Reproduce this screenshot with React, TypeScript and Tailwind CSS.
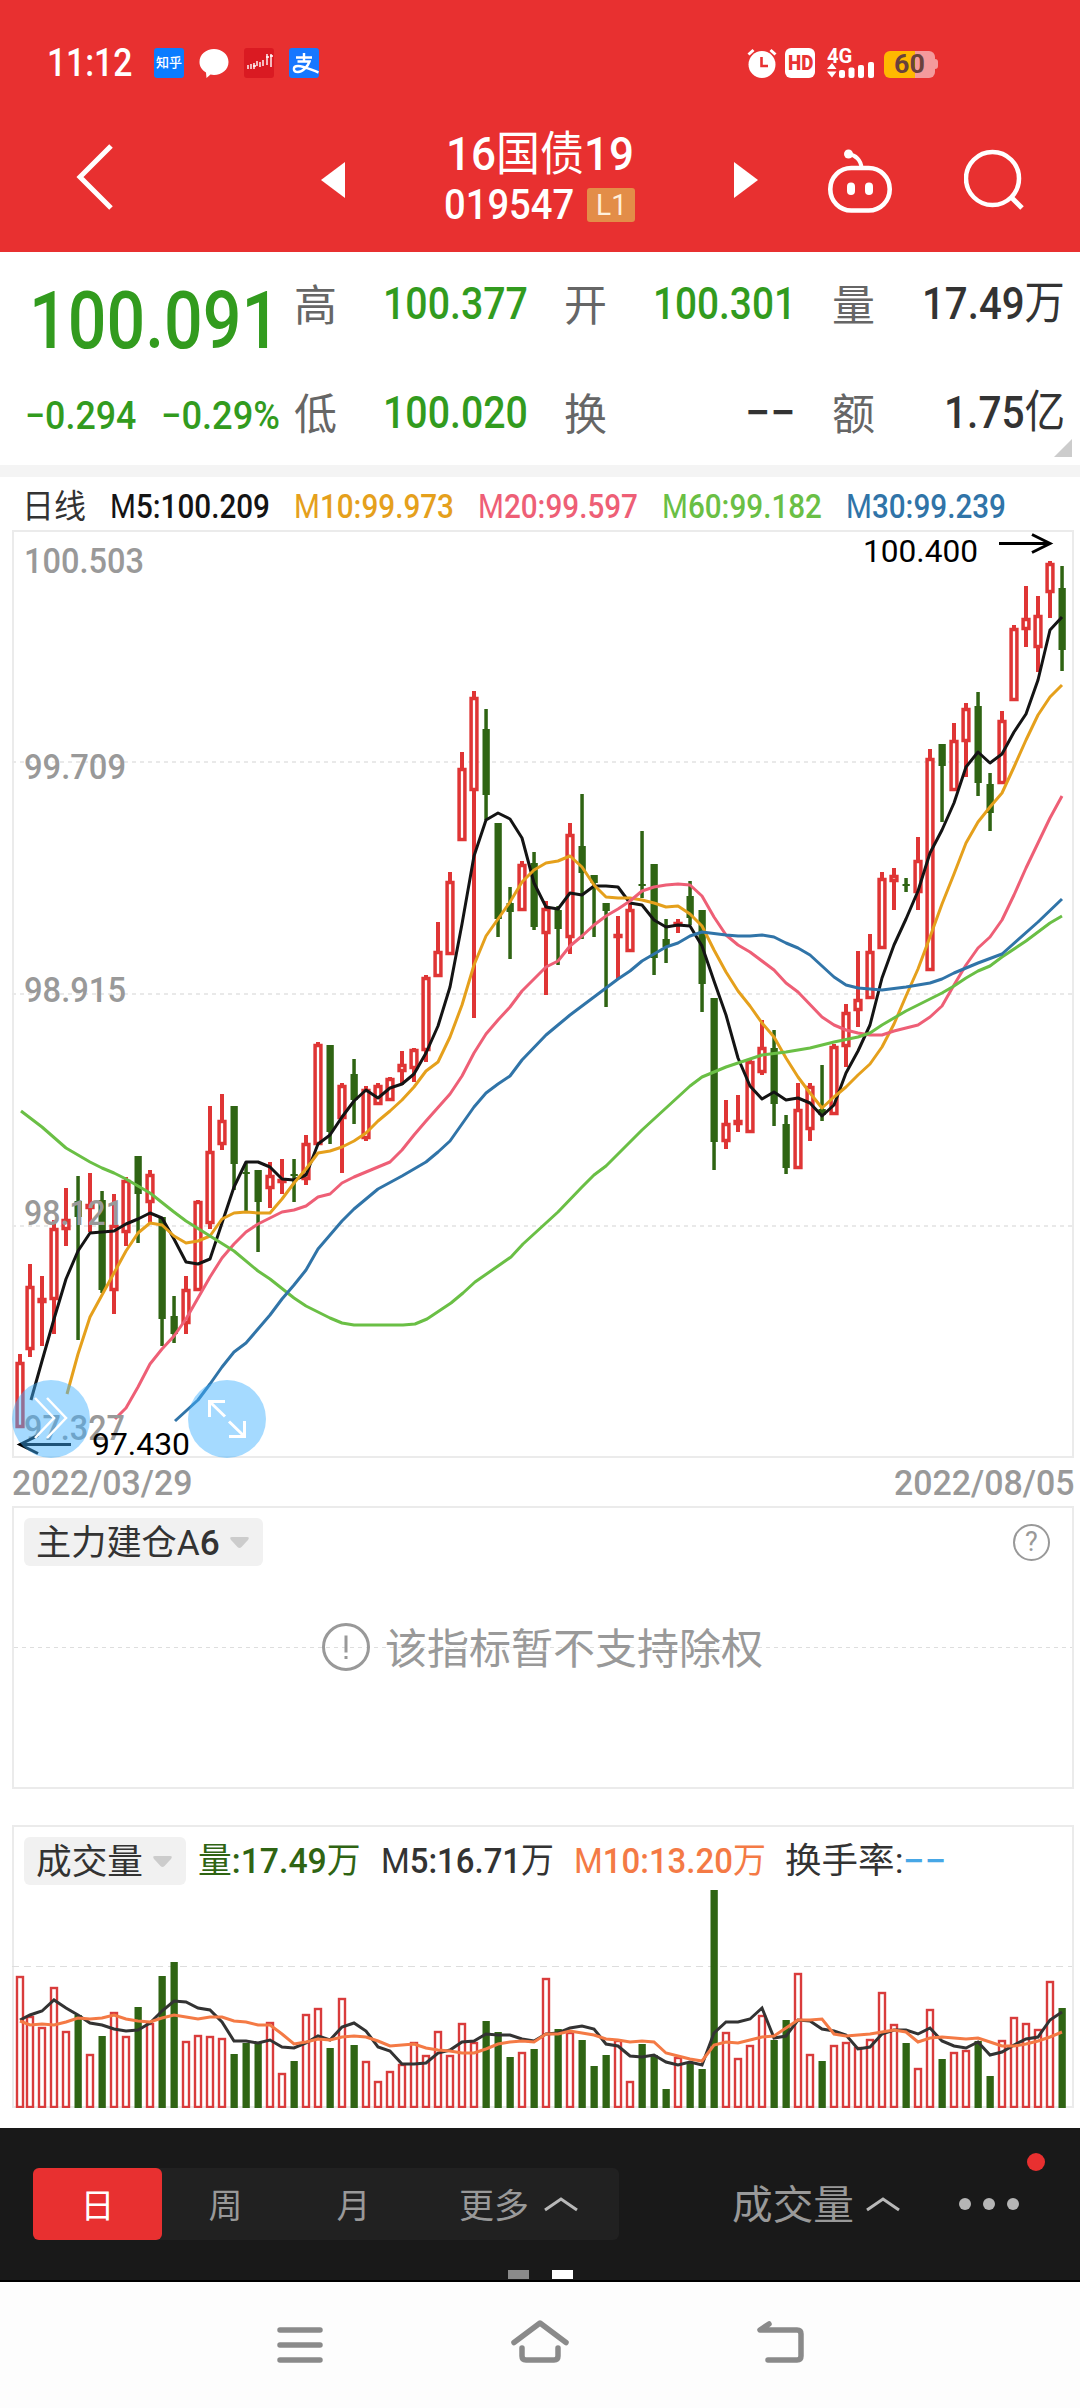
import { useLayoutEffect, useRef, useState } from "react";
import type { ReactNode } from "react";

/* ---------- helpers ---------- */

// Condenses or widens a run of text so that it occupies exactly `w` pixels.
function Fit({ w, className = "", children }: { w: number; className?: string; children: ReactNode }) {
  const ref = useRef<HTMLSpanElement>(null);
  const [scale, setScale] = useState(1);
  useLayoutEffect(() => {
    const el = ref.current;
    if (el && el.offsetWidth > 0) setScale(w / el.offsetWidth);
  }, [w]);
  return (
    <span className={"inline-flex shrink-0 justify-start whitespace-nowrap " + className} style={{ width: w }}>
      <span ref={ref} className="inline-block shrink-0 origin-left" style={{ transform: `scaleX(${scale})` }}>
        {children}
      </span>
    </span>
  );
}

// Figures are set in medium weight, letters and Chinese characters in regular.
function Mixed({ text }: { text: string }) {
  return (
    <>
      {text.split(/([0-9.:−/]+)/).map((part, i) =>
        i % 2 ? (
          <span key={i} className="font-medium">{part}</span>
        ) : (
          <span key={i} className="font-normal">{part}</span>
        ),
      )}
    </>
  );
}

/* ---------- price data (x, high, body top, body bottom, low, direction) ---------- */

type Candle = [number, number, number, number, number, "r" | "g"];

const candles: Candle[] = [
  [20, 1354, 1362, 1428, 1428, "r"], [30, 1264, 1286, 1350, 1357, "r"], [42, 1276, 1298, 1303, 1346, "r"],
  [54, 1220, 1228, 1300, 1334, "r"], [66, 1188, 1219, 1230, 1246, "r"], [78, 1176, 1201, 1217, 1340, "g"],
  [90, 1173, 1204, 1209, 1232, "r"], [102, 1191, 1200, 1290, 1293, "g"], [114, 1194, 1225, 1291, 1314, "r"],
  [126, 1177, 1180, 1233, 1246, "r"], [138, 1156, 1156, 1194, 1243, "g"], [150, 1170, 1174, 1203, 1223, "r"],
  [162, 1217, 1217, 1319, 1346, "g"], [174, 1296, 1316, 1334, 1343, "g"], [186, 1276, 1289, 1324, 1334, "r"],
  [198, 1200, 1201, 1291, 1291, "r"], [210, 1106, 1151, 1224, 1229, "r"], [222, 1094, 1120, 1145, 1150, "r"],
  [234, 1106, 1106, 1164, 1190, "g"], [246, 1163, 1172, 1174, 1213, "g"], [258, 1170, 1170, 1202, 1252, "g"],
  [270, 1162, 1175, 1189, 1208, "r"], [282, 1159, 1179, 1183, 1194, "r"], [294, 1159, 1174, 1176, 1202, "g"],
  [306, 1135, 1143, 1180, 1185, "r"], [318, 1042, 1044, 1145, 1145, "r"], [330, 1045, 1045, 1132, 1144, "g"],
  [342, 1083, 1085, 1119, 1173, "r"], [354, 1059, 1074, 1100, 1124, "g"], [366, 1086, 1089, 1139, 1141, "r"],
  [378, 1083, 1085, 1105, 1105, "r"], [390, 1077, 1078, 1101, 1101, "r"], [402, 1051, 1064, 1072, 1085, "r"],
  [414, 1048, 1049, 1069, 1082, "r"], [426, 975, 977, 1051, 1062, "r"], [438, 922, 951, 977, 977, "r"],
  [450, 872, 881, 955, 955, "r"], [462, 752, 768, 841, 841, "r"], [474, 691, 697, 791, 1018, "r"],
  [486, 709, 729, 795, 820, "g"], [498, 823, 823, 919, 937, "g"], [510, 887, 903, 912, 959, "g"],
  [522, 861, 864, 911, 911, "r"], [534, 852, 863, 927, 930, "g"], [546, 901, 908, 934, 995, "r"],
  [558, 906, 910, 929, 965, "g"], [570, 823, 834, 938, 954, "r"], [582, 794, 846, 873, 939, "g"],
  [594, 875, 875, 883, 937, "g"], [606, 903, 903, 911, 1007, "g"], [618, 916, 934, 938, 979, "r"],
  [630, 903, 909, 952, 952, "r"], [642, 831, 884, 886, 898, "g"], [654, 864, 864, 958, 975, "g"],
  [666, 919, 939, 947, 963, "g"], [678, 919, 922, 926, 933, "r"], [690, 881, 896, 918, 925, "g"],
  [702, 910, 910, 984, 1012, "g"], [714, 998, 998, 1142, 1170, "g"], [726, 1100, 1123, 1142, 1149, "r"],
  [738, 1095, 1120, 1125, 1132, "r"], [750, 1060, 1061, 1133, 1133, "r"], [762, 1020, 1047, 1073, 1075, "r"],
  [774, 1030, 1048, 1104, 1126, "g"], [786, 1115, 1124, 1168, 1174, "g"], [798, 1083, 1109, 1169, 1169, "r"],
  [810, 1083, 1086, 1130, 1141, "r"], [822, 1065, 1109, 1115, 1121, "g"], [834, 1044, 1046, 1115, 1115, "r"],
  [846, 1004, 1012, 1047, 1067, "r"], [858, 951, 999, 1011, 1027, "r"], [870, 934, 951, 999, 999, "r"],
  [882, 872, 878, 949, 949, "r"], [894, 868, 875, 882, 910, "r"], [906, 878, 884, 886, 892, "g"],
  [918, 837, 860, 893, 910, "r"], [930, 749, 758, 971, 971, "r"], [942, 744, 744, 766, 822, "g"],
  [954, 723, 740, 791, 791, "r"], [966, 703, 708, 742, 777, "r"], [978, 692, 706, 783, 796, "g"],
  [990, 773, 784, 813, 831, "g"], [1002, 711, 720, 784, 784, "r"], [1014, 625, 628, 701, 701, "r"],
  [1026, 586, 618, 630, 647, "r"], [1038, 596, 615, 648, 672, "r"], [1050, 561, 563, 593, 618, "r"],
  [1062, 566, 588, 650, 671, "g"],
];

const ma5 =
  "31,1400 42,1361 54,1319 66,1279 78,1251 90,1233 102,1232 114,1231 126,1224 138,1219 150,1213 162,1218 174,1239 186,1262 198,1264 210,1259 222,1223 234,1187 246,1162 258,1162 270,1167 282,1179 294,1180 306,1175 318,1144 330,1135 342,1117 354,1101 366,1090 378,1098 390,1088 402,1084 414,1074 426,1053 438,1026 450,987 462,924 474,856 486,820 498,813 510,819 522,838 534,883 546,907 558,909 570,893 582,895 594,886 606,886 618,887 630,903 642,905 654,920 666,927 678,925 690,926 702,946 714,981 726,1015 738,1058 750,1086 762,1099 774,1092 786,1100 798,1098 810,1103 822,1116 834,1105 846,1073 858,1051 870,1025 882,978 894,945 906,919 918,891 930,853 942,830 954,803 966,767 978,752 990,763 1002,754 1014,732 1026,714 1038,680 1050,630 1062,617";
const ma10 =
  "67,1394 78,1354 90,1317 102,1295 114,1273 126,1251 138,1233 150,1223 162,1225 174,1236 186,1243 198,1241 210,1236 222,1219 234,1213 246,1212 258,1213 270,1213 282,1199 294,1183 306,1169 318,1153 330,1151 342,1147 354,1141 366,1133 378,1121 390,1111 402,1100 414,1087 426,1071 438,1062 450,1037 462,1005 474,965 486,936 498,919 510,902 522,882 534,870 546,863 558,861 570,856 582,867 594,885 606,897 618,898 630,898 642,900 654,903 666,907 678,906 690,914 702,926 714,950 726,972 738,991 750,1006 762,1023 774,1037 786,1058 798,1077 810,1093 822,1108 834,1097 846,1087 858,1075 870,1064 882,1047 894,1024 906,996 918,969 930,937 942,904 954,874 966,843 978,822 990,807 1002,793 1014,767 1026,740 1038,715 1050,697 1062,685";
const ma20 =
  "115,1419 126,1408 138,1387 150,1364 162,1349 174,1336 186,1319 198,1298 210,1277 222,1258 234,1244 246,1232 258,1224 270,1218 282,1212 294,1210 306,1206 318,1197 330,1194 342,1183 354,1177 366,1172 378,1167 390,1162 402,1150 414,1135 426,1121 450,1094 462,1076 474,1053 486,1034 498,1020 510,1007 522,991 546,967 558,961 570,946 582,936 594,925 606,916 618,909 630,901 642,891 654,887 666,885 678,884 690,885 702,896 714,917 726,935 738,945 750,952 774,970 786,983 798,992 822,1017 834,1025 846,1030 858,1033 870,1035 882,1035 894,1031 918,1025 930,1017 942,1006 954,985 966,965 978,948 990,937 1002,920 1014,895 1026,868 1038,843 1050,818 1062,796";
const ma30 =
  "175,1421 186,1411 198,1400 210,1384 222,1367 234,1352 246,1343 258,1329 270,1315 282,1299 294,1285 306,1270 318,1249 330,1235 342,1221 354,1209 378,1189 402,1176 414,1169 426,1162 438,1152 450,1141 474,1107 486,1093 498,1084 510,1076 522,1060 546,1035 558,1025 570,1015 594,997 618,979 630,971 642,961 654,954 666,947 678,943 690,936 702,932 726,935 738,936 750,936 762,935 774,937 786,943 798,948 810,955 834,977 846,985 858,988 882,990 906,987 930,983 942,979 954,973 978,963 1002,954 1038,922 1062,899";
const ma60 =
  "21,1111 42,1127 66,1148 90,1162 102,1168 114,1173 126,1179 150,1193 174,1212 186,1221 210,1236 234,1251 258,1271 270,1279 294,1298 306,1306 330,1318 342,1323 354,1325 403,1325 415,1324 427,1319 451,1303 463,1293 475,1282 511,1257 523,1244 558,1212 582,1187 594,1175 606,1166 630,1142 642,1130 666,1108 690,1086 702,1077 726,1067 750,1059 762,1055 786,1052 810,1048 834,1042 858,1037 870,1033 882,1025 906,1011 942,993 954,986 966,978 978,971 990,966 1002,957 1026,941 1038,932 1050,923 1062,916";

/* ---------- volume data ---------- */

const volumeTops = [
  1976, 2016, 2027, 1987, 2031, 2015, 2054, 2036, 2012, 2036, 2007, 2023, 1976, 1962, 2041, 2035, 2036, 2038, 2054,
  2043, 2043, 2022, 2073, 2061, 2014, 2008, 2048, 1998, 2045, 2061, 2081, 2071, 2064, 2042, 2055, 2031, 2055, 2023,
  2042, 2021, 2032, 2057, 2052, 2049, 1978, 2029, 2032, 2040, 2066, 2055, 2040, 2081, 2044, 2055, 2089, 2057, 2062,
  2069, 1890, 2032, 2058, 2045, 2015, 2040, 2020, 1973, 2054, 2061, 2045, 2042, 2047, 2039, 1992, 2024, 2043, 2068,
  2009, 2059, 2052, 2050, 2041, 2076, 2040, 2017, 2023, 2029, 1981, 2008,
];
const volumeMa5 = [
  2020, 2015, 2011, 2000, 2008, 2015, 2023, 2025, 2029, 2031, 2030, 2023, 2011, 2001, 2002, 2008, 2010, 2022, 2041,
  2041, 2043, 2040, 2047, 2048, 2043, 2036, 2040, 2027, 2023, 2031, 2047, 2051, 2064, 2064, 2063, 2053, 2050, 2042,
  2041, 2034, 2035, 2035, 2039, 2041, 2034, 2033, 2028, 2026, 2029, 2044, 2046, 2056, 2057, 2055, 2062, 2065, 2062,
  2065, 2033, 2022, 2022, 2019, 2008, 2038, 2036, 2020, 2021, 2029, 2031, 2035, 2049, 2047, 2034, 2030, 2030, 2034,
  2028, 2041, 2046, 2048, 2042, 2055, 2052, 2045, 2039, 2037, 2020, 2012,
];
const volumeMa10 = [
  2021, 2025, 2024, 2025, 2022, 2018, 2019, 2018, 2015, 2019, 2021, 2022, 2018, 2015, 2017, 2019, 2017, 2017, 2021,
  2022, 2025, 2025, 2034, 2044, 2042, 2039, 2040, 2037, 2036, 2037, 2041, 2046, 2045, 2044, 2048, 2050, 2051, 2053,
  2053, 2049, 2044, 2042, 2041, 2042, 2034, 2034, 2031, 2033, 2035, 2039, 2040, 2042, 2041, 2042, 2053, 2056, 2059,
  2061, 2045, 2042, 2043, 2040, 2037, 2036, 2028, 2020, 2020, 2019, 2034, 2036, 2035, 2034, 2032, 2030, 2032, 2042,
  2038, 2037, 2038, 2039, 2038, 2042, 2046, 2046, 2044, 2041, 2037, 2032,
];
const volumePath = (ys: number[]) => ys.map((y, i) => `${candles[i][0]},${y}`).join(" ");

/* ---------- status bar ---------- */

function StatusBar() {
  return (
    <div className="flex h-[91px] items-center pt-[35px] pl-[47px] text-white">
      <Fit w={85} className="text-[38px] leading-[56px] font-medium">11:12</Fit>
      <div className="ml-[22px] flex items-center gap-[15px]">
        <div className="flex size-[30px] items-center justify-center rounded-[3px] bg-[#0a7cff] text-[13px] font-medium">知乎</div>
        <svg className="size-[30px]" viewBox="0 0 30 30" fill="currentColor">
          <path d="M15 1C23 1 29.500 6.500 29.500 14S23 27 15 27c-1.500 0-2.500-.2-3.500-.4L7.500 30 7 24.500C3 22 .5 18.500.5 14 .5 6.500 7 1 15 1z" />
        </svg>
        <svg className="size-[30px]" viewBox="0 0 30 30">
          <rect width="30" height="30" rx="3" fill="#da1a22" />
          <path d="M4 17v4M7 16v5M10 15v6M13 13v5M16 14v5M19 12v6M23 6v11M27 6v13" stroke="#fff" strokeWidth="1.400" />
          <path d="M22 9h3M26 8h3M9 18h3" stroke="#fff" strokeWidth="1.500" />
        </svg>
        <div className="flex size-[30px] items-center justify-center rounded-[3px] bg-[#1677ff]">
          <svg className="size-[30px]" viewBox="0 0 30 30" fill="none" stroke="#fff" strokeWidth="2.400">
            <path d="M7 9.500H23M15 5V13.500M8.500 13.500H20.500C19 18 14 24 9 24 3.500 24 3.500 18 9 18 15 18 20 21 29.500 24.500" />
          </svg>
        </div>
      </div>
      <svg className="ml-[428px] h-[30px] w-[30px]" viewBox="0 0 30 30">
        <circle cx="15" cy="16.500" r="13.500" fill="#fff" />
        <path d="M14.500 9v9H21" fill="none" stroke="#e83232" strokeWidth="2.600" />
        <path d="M1.500 6.500 6.500 2M28.500 6.500 23.500 2" stroke="#fff" strokeWidth="3" />
      </svg>
      <div className="ml-[8px] flex size-[30px] items-center justify-center rounded-[6px] bg-white text-[#e83232]">
        <Fit w={25} className="text-[21px] leading-none font-black">HD</Fit>
      </div>
      <div className="relative ml-[12px] h-[30px] w-[47px]">
        <Fit w={25} className="absolute top-[-2px] left-0 text-[21px] leading-none font-bold">4G</Fit>
        <svg className="absolute inset-0 h-[30px] w-[47px]" viewBox="0 0 47 30" fill="#fff">
          <path d="M0 21l5-6 4.500 6zM0 23.500l5 6 4.500-6z" />
          <rect x="12" y="22" width="6" height="8" rx="2" />
          <rect x="21.500" y="19.500" width="6" height="10.500" rx="2" />
          <rect x="31" y="17" width="6" height="13" rx="2" />
          <rect x="41" y="14" width="6" height="16" rx="2" />
        </svg>
      </div>
      <div className="mt-[2px] ml-[10px] flex items-center">
        <div className="flex h-[27px] w-[51px] items-center justify-center rounded-[6px] bg-gradient-to-r from-[#ffb900] from-60% to-[#f49a9c] to-60% text-[#69413c]">
          <Fit w={31} className="text-[26px] leading-none font-bold">60</Fit>
        </div>
        <div className="h-[10px] w-[3px] rounded-r-sm bg-[#f49a9c]" />
      </div>
    </div>
  );
}

function TitleBar() {
  return (
    <div className="flex h-[161px] text-white">
      <svg className="mt-[52px] ml-[74px] h-[68px] w-[40px]" viewBox="0 0 40 68" fill="none" stroke="currentColor" strokeWidth="5">
        <path d="M37 3 6 34 37 65" />
      </svg>
      <svg className="mt-[71px] ml-[207px] h-[36px] w-[24px]" viewBox="0 0 24 36" fill="currentColor">
        <path d="M24 0v36L0 18z" />
      </svg>
      <div className="ml-[101px] w-[194px]">
        <Fit w={188} className="mt-[37px] text-[47px] leading-[52px]"><Mixed text="16国债19" /></Fit>
        <div className="mt-[4px] flex h-[42px] items-center">
          <Fit w={130} className="ml-[-2px] text-[42px] leading-[42px] font-medium">019547</Fit>
          <div className="ml-[13px] flex h-[34px] w-[48px] items-center justify-center rounded-[3px] bg-[#e38d48] text-[#fff0dc]">
            <Fit w={31} className="text-[29px] leading-none">L1</Fit>
          </div>
        </div>
      </div>
      <svg className="mt-[71px] ml-[94px] h-[36px] w-[24px]" viewBox="0 0 24 36" fill="currentColor">
        <path d="M0 0v36l24-18z" />
      </svg>
      <svg className="mt-[57px] ml-[70px] h-[66px] w-[64px]" viewBox="0 0 64 66" fill="none" stroke="currentColor">
        <rect x="2.300" y="20" width="59.400" height="42.500" rx="21" strokeWidth="4.600" />
        <path d="M20.500 6c7 1 12.500 6 13 14" strokeWidth="4" />
        <circle cx="20.500" cy="6" r="4.500" fill="currentColor" stroke="none" />
        <rect x="19" y="34.500" width="8" height="12.500" rx="4" fill="currentColor" stroke="none" />
        <rect x="37" y="34.500" width="8" height="12.500" rx="4" fill="currentColor" stroke="none" />
      </svg>
      <svg className="mt-[58px] ml-[72px] h-[62px] w-[62px]" viewBox="0 0 62 62" fill="none" stroke="currentColor" strokeWidth="4.500">
        <circle cx="28.500" cy="29.500" r="26.500" />
        <path d="M47 48 58 59" strokeWidth="5" />
      </svg>
    </div>
  );
}

/* ---------- quote block ---------- */

function Quote({ label, value, w, dark = false }: { label: string; value: string; w: number; dark?: boolean }) {
  return (
    <div className="flex h-[56px] items-center justify-between">
      <span className="mt-[3px] text-[43px] leading-[56px] text-[#666]">{label}</span>
      {dark ? (
        <Fit w={w} className="text-[45px] leading-[56px] text-[#333]"><Mixed text={value} /></Fit>
      ) : (
        <Fit w={w} className="text-[45px] leading-[56px] font-medium text-[#329b1e]">{value}</Fit>
      )}
    </div>
  );
}

function QuotePanel() {
  return (
    <div className="relative flex h-[213px] bg-white">
      <div className="w-[294px] text-[#329b1e]">
        <Fit w={251} className="mt-[21px] ml-[29px] text-[79px] leading-[96px] font-medium">100.091</Fit>
        <div className="mt-[19px] flex h-[56px] items-center">
          <Fit w={111} className="ml-[25px] text-[39px] leading-[56px] font-medium">−0.294</Fit>
          <Fit w={119} className="ml-[25px] text-[39px] leading-[56px] font-medium">−0.29%</Fit>
        </div>
      </div>
      <div className="flex gap-[36px] pt-[24px]">
        <div className="flex w-[234px] flex-col gap-[53px]">
          <Quote label="高" value="100.377" w={145} />
          <Quote label="低" value="100.020" w={145} />
        </div>
        <div className="flex w-[232px] flex-col gap-[53px]">
          <Quote label="开" value="100.301" w={143} />
          <Quote label="换" value="−−" w={51} dark />
        </div>
        <div className="flex w-[233px] flex-col gap-[53px]">
          <Quote label="量" value="17.49万" w={143} dark />
          <Quote label="额" value="1.75亿" w={121} dark />
        </div>
      </div>
      <svg className="absolute right-[8px] bottom-[8px] size-[18px]" viewBox="0 0 18 18">
        <path d="M18 0v18H0z" fill="#ccc" />
      </svg>
    </div>
  );
}

/* ---------- charts ---------- */

const axis = [
  { text: "100.503", y: 573, w: 120 },
  { text: "99.709", y: 779, w: 102 },
  { text: "98.915", y: 1002, w: 102 },
  { text: "98.121", y: 1225, w: 100 },
  { text: "97.327", y: 1440, w: 101 },
];

function KLineChart() {
  return (
    <div className="relative h-[930px]">
      <svg className="block h-[930px] w-[1080px]" viewBox="0 530 1080 930" fill="none">
        <rect x="13" y="531" width="1060" height="926" stroke="#ebebeb" strokeWidth="2" />
        <path d="M12 762H1072M12 994H1072M12 1226H1072" stroke="#e9e9e9" strokeWidth="2" strokeDasharray="4 4" />
        {candles.map(([x, high, top, bottom, low, dir]) =>
          dir === "g" ? (
            <g key={x} fill="#2f6413">
              <rect x={x - 1.7} y={high} width="3.500" height={low - high} />
              <rect x={x - 3.5} y={top} width="7.300" height={Math.max(bottom - top, 2)} />
            </g>
          ) : (
            <g key={x}>
              <path d={`M${x} ${high}V${top + 1}M${x} ${bottom - 1}V${low}`} stroke="#df3535" strokeWidth="4" />
              <rect x={x - 2.9} y={top + 1.5} width="5.800" height={Math.max(bottom - top - 3, 1)} stroke="#df3535" strokeWidth="3.500" />
            </g>
          ),
        )}
        <g strokeWidth="3" strokeLinejoin="round">
          <polyline points={ma5} stroke="#141414" />
          <polyline points={ma10} stroke="#e5a01c" />
          <polyline points={ma20} stroke="#ee5f76" />
          <polyline points={ma60} stroke="#6abf45" />
          <polyline points={ma30} stroke="#3074a8" />
        </g>
        <g fill="#999" fontSize="35" fontWeight="500" className="font-['Roboto','Noto_Sans_CJK_SC',sans-serif]">
          {axis.map((a) => (
            <text key={a.text} x="24" y={a.y} textLength={a.w} lengthAdjust="spacingAndGlyphs">{a.text}</text>
          ))}
        </g>
        <g fill="#000" fontSize="31" className="font-['Roboto','Noto_Sans_CJK_SC',sans-serif]">
          <text x="863" y="562" textLength="115" lengthAdjust="spacingAndGlyphs">100.400</text>
          <text x="92" y="1455" textLength="98" lengthAdjust="spacingAndGlyphs">97.430</text>
        </g>
        <g stroke="#000" strokeWidth="3">
          <path d="M999 543.500H1049M1032 534.500 1050 543.500 1032 552.500" />
          <path d="M71 1444.500H21M38 1435.500 20 1444.500 38 1453.500" />
        </g>
      </svg>
      <button className="absolute top-[850px] left-[12px] flex size-[78px] items-center justify-center rounded-full bg-[#3fb1ff]/47">
        <svg className="size-[78px]" viewBox="0 0 78 78" fill="none" stroke="#fff" strokeWidth="2.500">
          <path d="M23 18 42 38 23 58M35 18 54 38 35 58" />
        </svg>
      </button>
      <button className="absolute top-[850px] left-[188px] flex size-[78px] items-center justify-center rounded-full bg-[#3fb1ff]/47">
        <svg className="size-[78px]" viewBox="0 0 78 78" fill="none" stroke="#fff" strokeWidth="3">
          <path d="M21.500 37V21.500H37M22 22 37 36.500M56.500 41V56.500H41M56 56 41 41.500" />
        </svg>
      </button>
    </div>
  );
}

function VolumeChart() {
  return (
    <svg className="block h-[218px] w-[1080px]" viewBox="0 1890 1080 218" fill="none">
      <path d="M12 1966.500H1072" stroke="#ddd" strokeDasharray="7 5" />
      {volumeTops.map((y, i) => {
        const x = candles[i][0];
        return candles[i][5] === "g" ? (
          <rect key={x} x={x - 3.5} y={y} width="7.300" height={2108 - y} fill="#2f6413" />
        ) : (
          <rect key={x} x={x - 3} y={y + 1} width="6" height={2106 - y} stroke="#d93c3c" strokeWidth="2.400" />
        );
      })}
      <polyline points={volumePath(volumeMa5)} stroke="#333" strokeWidth="3" />
      <polyline points={volumePath(volumeMa10)} stroke="#f47a45" strokeWidth="3" />
    </svg>
  );
}

function Dropdown({ text, w }: { text: string; w: number }) {
  return (
    <button className="flex h-[48px] items-center gap-[10px] rounded-[6px] bg-[#f1f1f1] pr-[14px] pl-[12px] text-[#333]">
      <Fit w={w} className="mt-[3px] text-[35px] leading-[48px]"><Mixed text={text} /></Fit>
      <svg className="h-[11px] w-[19px]" viewBox="0 0 19 11" fill="#ccc">
        <path d="M2 0h15q3 0 1 3l-6.500 7q-2 2-4 0L1 3Q-1 0 2 0z" />
      </svg>
    </button>
  );
}

/* ---------- bottom toolbar ---------- */

function Caret() {
  return (
    <svg className="h-[16px] w-[36px]" viewBox="0 0 36 16" fill="none" stroke="#b8b8b8" strokeWidth="3">
      <path d="M2 14 18 3 34 14" />
    </svg>
  );
}

function Toolbar() {
  return (
    <div className="relative h-[154px] border-b-2 border-black bg-[#191919] pt-[40px] text-[#999]">
      <div className="flex h-[72px] items-center pl-[33px]">
        <div className="flex h-[72px] w-[586px] items-center rounded-[6px] bg-[#212121] text-[34px]">
          <div className="flex h-[72px] w-[129px] items-center justify-center rounded-[6px] bg-[#e83030] pt-[4px] text-white">日</div>
          <div className="w-[127px] pt-[4px] text-center">周</div>
          <div className="w-[129px] pt-[4px] text-center">月</div>
          <div className="ml-[41px] flex items-center gap-[14px]">
            <Fit w={70} className="mt-[4px]">更多</Fit>
            <Caret />
          </div>
        </div>
        <div className="ml-[113px] flex items-center gap-[11px] text-[40px]">
          <Fit w={122} className="mt-[4px]">成交量</Fit>
          <Caret />
        </div>
        <div className="ml-[58px] flex gap-[12px]">
          <i className="size-[12px] rounded-full bg-[#b5b5b5]" />
          <i className="size-[12px] rounded-full bg-[#b5b5b5]" />
          <i className="size-[12px] rounded-full bg-[#b5b5b5]" />
        </div>
      </div>
      <span className="absolute top-[25px] right-[35px] size-[18px] rounded-full bg-[#e83030]" />
      <div className="mt-[30px] flex justify-center gap-[23px]">
        <i className="h-[9px] w-[21px] bg-[#8a8a8a]" />
        <i className="h-[9px] w-[21px] bg-white" />
      </div>
    </div>
  );
}

function SystemNav() {
  return (
    <div className="flex h-[126px] items-start bg-[#fdfdfd] pt-[36px] pl-[275px]">
      <svg className="h-[48px] w-[49px]" viewBox="275 2318 49 48" stroke="#8a8a8a" strokeWidth="5.500" strokeLinecap="round">
        <path d="M280 2330H320M280 2345H320M280 2360H320" />
      </svg>
      <svg className="ml-[184px] h-[48px] w-[64px]" viewBox="508 2318 64 48" fill="none" stroke="#8a8a8a" strokeWidth="5.500" strokeLinecap="round" strokeLinejoin="round">
        <path d="M514 2342.500 540 2323 566 2342.500" />
        <path d="M522 2348V2356Q522 2360 526 2360H554Q558 2360 558 2356V2348" />
      </svg>
      <svg className="ml-[180px] h-[48px] w-[58px]" viewBox="752 2318 58 48" fill="none" stroke="#8a8a8a" strokeWidth="5.500" strokeLinecap="round" strokeLinejoin="round">
        <path d="M769 2324 760 2330H797Q801 2330 801 2334V2356Q801 2360 797 2360H768" />
      </svg>
    </div>
  );
}

/* ---------- page ---------- */

export default function App() {
  return (
    <div className="flex h-[2408px] w-[1080px] flex-col overflow-hidden bg-white font-['Roboto','Noto_Sans_CJK_SC',sans-serif]">
      <header className="h-[252px] bg-[#e83030]">
        <StatusBar />
        <TitleBar />
      </header>

      <QuotePanel />
      <div className="h-[12px] bg-[#f4f4f4]" />

      <div className="flex h-[53px] items-center gap-[24px] pt-[6px] pl-[22px] text-[33px]">
        <Fit w={64} className="text-[#333]">日线</Fit>
        <Fit w={160} className="text-[#141414]"><Mixed text="M5:100.209" /></Fit>
        <Fit w={160} className="text-[#e5a01c]"><Mixed text="M10:99.973" /></Fit>
        <Fit w={160} className="text-[#ee5f76]"><Mixed text="M20:99.597" /></Fit>
        <Fit w={160} className="text-[#6abf45]"><Mixed text="M60:99.182" /></Fit>
        <Fit w={160} className="text-[#3074a8]"><Mixed text="M30:99.239" /></Fit>
      </div>

      <KLineChart />

      <div className="flex h-[46px] items-center justify-between pt-[2px] pr-[6px] pl-[12px] text-[35px] font-medium text-[#999]">
        <Fit w={180}>2022/03/29</Fit>
        <Fit w={180}>2022/08/05</Fit>
      </div>

      <section className="mx-[12px] h-[283px] w-[1062px] border-2 border-[#ebebeb] px-[10px] pt-[10px]">
        <div className="flex items-center justify-between">
          <Dropdown text="主力建仓A6" w={184} />
          <div className="mr-[12px] flex size-[37px] items-center justify-center rounded-full border-[2.5px] border-[#999] text-[27px] leading-none text-[#999]">?</div>
        </div>
        <div className="mx-[-10px] mt-[46px] flex h-[70px] items-center bg-[repeating-linear-gradient(90deg,#dedede_0_4px,transparent_4px_8px)] bg-[length:100%_1px] bg-center bg-no-repeat pl-[308px] text-[#999]">
          <svg className="size-[48px]" viewBox="0 0 48 48" fill="none" stroke="currentColor" strokeWidth="3">
            <circle cx="24" cy="24" r="22.500" />
            <path d="M24 12.500V29.500M24 33V36" />
          </svg>
          <Fit w={378} className="mt-[5px] ml-[15px] text-[42px]">该指标暂不支持除权</Fit>
        </div>
      </section>

      <section className="mt-[36px] h-[303px]">
        <div className="mx-[12px] h-[283px] w-[1062px] border-2 border-[#ebebeb]">
          <div className="flex h-[63px] items-start pt-[10px] pl-[10px] text-[35px] leading-[48px] text-[#333]">
            <Dropdown text="成交量" w={107} />
            <Fit w={163} className="mt-[1px] ml-[12px] text-[#2f6413]"><Mixed text="量:17.49万" /></Fit>
            <Fit w={173} className="mt-[1px] ml-[20px]"><Mixed text="M5:16.71万" /></Fit>
            <Fit w={192} className="mt-[1px] ml-[20px] text-[#f47a45]"><Mixed text="M10:13.20万" /></Fit>
            <Fit w={118} className="mt-[1px] ml-[19px]">换手率:</Fit>
            <Fit w={43} className="mt-[1px] text-[#47a7e6]"><Mixed text="−−" /></Fit>
          </div>
          <div className="ml-[-14px]">
            <VolumeChart />
          </div>
        </div>
      </section>

      <Toolbar />
      <SystemNav />
    </div>
  );
}
